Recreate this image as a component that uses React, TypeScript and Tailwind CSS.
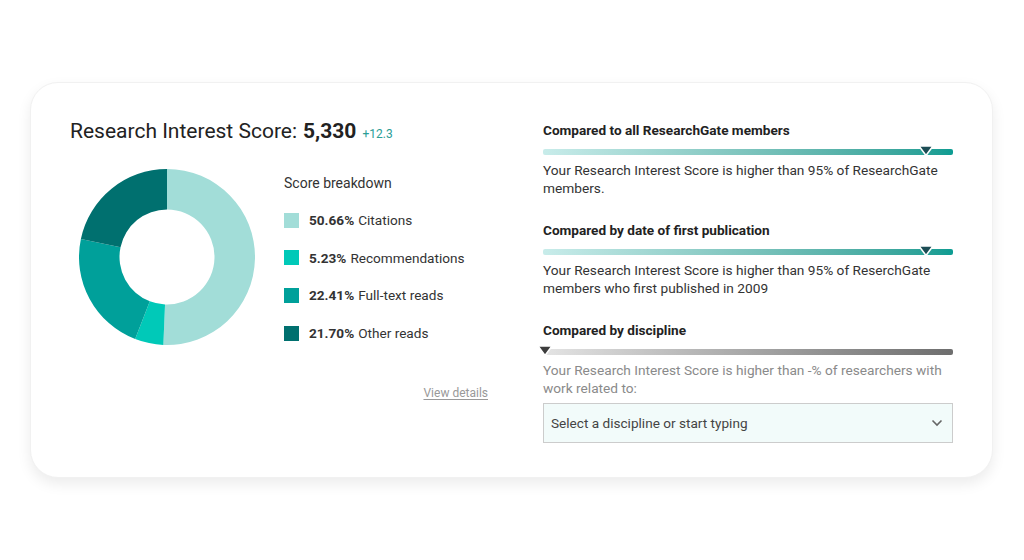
import React from "react";

const slices = [
  { pct: 50.66, label: "Citations", color: "#a2ddd8" },
  { pct: 5.23, label: "Recommendations", color: "#00c9b8" },
  { pct: 22.41, label: "Full-text reads", color: "#00a09a" },
  { pct: 21.7, label: "Other reads", color: "#00706f" },
];

// build a donut slice path between two angles (degrees, 0 = top, clockwise)
const arc = (a0: number, a1: number, R: number, r: number, c: number) => {
  const pt = (a: number, rad: number) => {
    const t = ((a - 90) * Math.PI) / 180;
    return `${c + rad * Math.cos(t)} ${c + rad * Math.sin(t)}`;
  };
  const large = a1 - a0 > 180 ? 1 : 0;
  return `M ${pt(a0, R)} A ${R} ${R} 0 ${large} 1 ${pt(a1, R)} L ${pt(a1, r)} A ${r} ${r} 0 ${large} 0 ${pt(a0, r)} Z`;
};

const Donut = () => {
  let acc = 0;
  return (
    <svg width="176" height="176" viewBox="0 0 176 176">
      {slices.map((s, i) => {
        const a0 = (acc / 100) * 360;
        acc += s.pct;
        const a1 = (acc / 100) * 360;
        return <path key={i} d={arc(a0, a1, 88, 47.5, 88)} fill={s.color} />;
      })}
    </svg>
  );
};

const Marker = ({ color }: { color: string }) => (
  <svg width="16" height="12" viewBox="0 0 16 12" className="absolute top-[-4px]">
    <path d="M1 1 L15 1 L8 10.5 Z" fill={color} stroke="#ffffff" strokeWidth="1.5" strokeLinejoin="round" />
  </svg>
);

const Compare = ({
  title,
  text,
  muted,
}: {
  title: string;
  text: string;
  muted?: boolean;
}) => (
  <div className="flex flex-col">
    <div className="text-[13.6px] leading-[18px] font-bold text-[#222]">{title}</div>
    <div className="relative mt-[10px] h-[6px]">
      <div
        className={
          muted
            ? "h-full rounded-[2px] bg-gradient-to-r from-[#e4e4e4] to-[#6e6e6e]"
            : "h-full rounded-[2px] bg-gradient-to-r from-[#c8ecea] to-[#0b9c92]"
        }
      />
      <div className={muted ? "absolute left-[-6px] top-0" : "absolute left-[375px] top-0"}>
        <Marker color={muted ? "#3d3d3d" : "#1c4d55"} />
      </div>
    </div>
    <p
      className={
        muted
          ? "mt-[6px] text-[13.7px] leading-[18px] text-[#8a8a8a]"
          : "mt-[6px] text-[13.7px] leading-[18px] text-[#333]"
      }
    >
      {text}
    </p>
  </div>
);

export default function App() {
  return (
    <div className="w-[1024px] h-[560px] bg-white overflow-hidden font-['Roboto',sans-serif]">
      <div className="ml-[30px] mt-[82px] w-[963px] h-[396px] rounded-[28px] bg-white border border-[#f1f1f1] shadow-[0_6px_14px_rgba(0,0,0,0.08)] flex pl-[39px] pt-[33px]">
        {/* left: score + breakdown */}
        <div className="w-[420px] flex flex-col">
          <div className="h-[28px] flex items-baseline text-[#222]">
            <span className="text-[21px]">Research Interest Score:</span>
            <span className="text-[21px] font-bold ml-[6px]">5,330</span>
            <span className="text-[12px] text-[#2a9d96] ml-[6px]">+12.3</span>
          </div>
          <div className="flex mt-[25px]">
            <div className="ml-[9px]">
              <Donut />
            </div>
            <div className="ml-[29px] flex flex-col flex-1">
              <div className="mt-[4px] text-[14px] leading-[20px] text-[#333]">Score breakdown</div>
              <ul className="mt-[17px] flex flex-col gap-[17.7px]">
                {slices.map((s) => (
                  <li key={s.label} className="flex items-center h-[20px] text-[13.6px] text-[#333]">
                    <span className="w-[15px] h-[15px] mr-[10px]" style={{ background: s.color }} />
                    <span className="font-bold">{s.pct.toFixed(2)}%</span>
                    <span className="ml-[4px]">{s.label}</span>
                  </li>
                ))}
              </ul>
              <div className="mt-[37px] self-end mr-[2px]">
                <a className="text-[12px] text-[#999] underline underline-offset-2">View details</a>
              </div>
            </div>
          </div>
        </div>

        {/* right: comparisons */}
        <div className="ml-[53px] w-[410px] flex flex-col pt-[5px]">
          <Compare
            title="Compared to all ResearchGate members"
            text="Your Research Interest Score is higher than 95% of ResearchGate members."
          />
          <div className="mt-[24px]">
            <Compare
              title="Compared by date of first publication"
              text="Your Research Interest Score is higher than 95% of ReserchGate members who first published in 2009"
            />
          </div>
          <div className="mt-[24px]">
            <Compare
              title="Compared by discipline"
              muted
              text="Your Research Interest Score is higher than -% of researchers with work related to:"
            />
          </div>
          <div className="mt-[6px] h-[40px] border border-[#cccccc] bg-[#f2fbfa] flex items-center justify-between px-[7px]">
            <span className="text-[13.6px] text-[#444]">Select a discipline or start typing</span>
            <svg width="12" height="8" viewBox="0 0 12 8" className="mr-[2px]">
              <path d="M1.5 1.5 L6 6 L10.5 1.5" fill="none" stroke="#666" strokeWidth="1.6" />
            </svg>
          </div>
        </div>
      </div>
    </div>
  );
}
